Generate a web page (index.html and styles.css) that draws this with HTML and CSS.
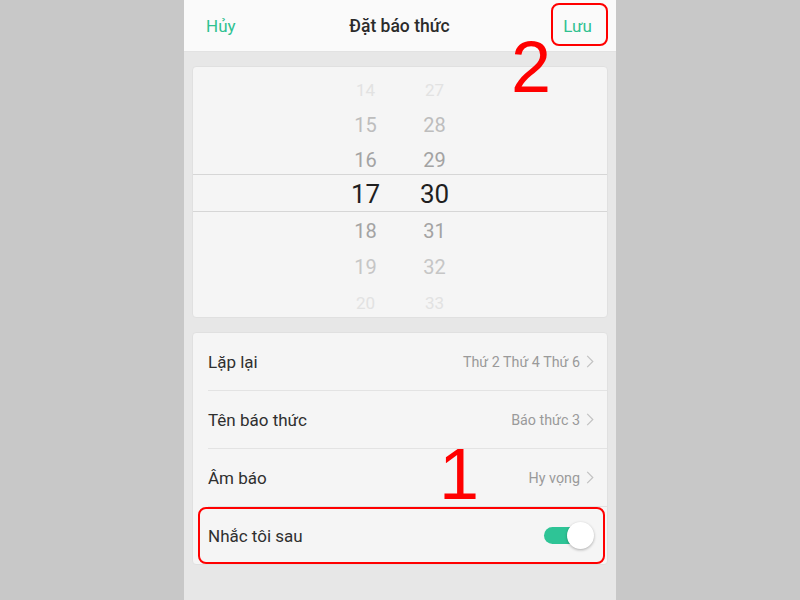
FILE: index.html
```html
<!DOCTYPE html>
<html lang="vi">
<head>
<meta charset="utf-8">
<link rel="stylesheet" href="styles.css">
</head>
<body>
<div class="page">
  <div class="phone">
    <header class="topbar">
      <span class="action">Hủy</span>
      <span class="title">Đặt báo thức</span>
      <span class="action save">Lưu</span>
    </header>

    <section class="card picker">
      <div class="wheel">
        <div class="col">
          <div class="item f3">14</div>
          <div class="item f2">15</div>
          <div class="item f1">16</div>
          <div class="item sel">17</div>
          <div class="item f1">18</div>
          <div class="item f2b">19</div>
          <div class="item f3">20</div>
        </div>
        <div class="col">
          <div class="item f3">27</div>
          <div class="item f2">28</div>
          <div class="item f1">29</div>
          <div class="item sel">30</div>
          <div class="item f1">31</div>
          <div class="item f2b">32</div>
          <div class="item f3">33</div>
        </div>
      </div>
      <div class="band"></div>
    </section>

    <section class="card list">
      <div class="row">
        <span class="label">Lặp lại</span>
        <span class="value">Thứ 2 Thứ 4 Thứ 6<svg class="chev" viewBox="0 0 8 14"><path d="M1 1l6 6-6 6" /></svg></span>
      </div>
      <div class="row">
        <span class="label">Tên báo thức</span>
        <span class="value">Báo thức 3<svg class="chev" viewBox="0 0 8 14"><path d="M1 1l6 6-6 6" /></svg></span>
      </div>
      <div class="row">
        <span class="label">Âm báo</span>
        <span class="value">Hy vọng<svg class="chev" viewBox="0 0 8 14"><path d="M1 1l6 6-6 6" /></svg></span>
      </div>
      <div class="row last">
        <span class="label">Nhắc tôi sau</span>
        <span class="toggle"><span class="knob"></span></span>
      </div>
    </section>

    <span class="mark mark-save"></span>
    <span class="num num-2">2</span>
    <span class="mark mark-row"></span>
    <span class="num num-1">1</span>
  </div>
</div>
</body>
</html>
```

FILE: styles.css
```css
* { box-sizing: border-box; }
html, body { margin: 0; padding: 0; }
body {
  background: #c8c8c8;
  font-family: Roboto, "Noto Sans", "DejaVu Sans", sans-serif;
}
.page {
  display: flex;
  justify-content: center;
  height: 600px;
  overflow: hidden;
}
.phone {
  position: relative;
  width: 432px;
  height: 600px;
  background: #e7e7e7;
}
.topbar {
  height: 52px;
  background: #fafafa;
  border-bottom: 1px solid #e2e2e2;
  display: flex;
  align-items: center;
  justify-content: space-between;
  padding: 0 24px 0 22px;
}
.action {
  color: #2fc190;
  font-size: 17px;
}
.title {
  color: #2b2b2b;
  font-size: 17.5px;
  font-weight: 500;
}
.mark {
  position: absolute;
  z-index: 5;
  border: 2px solid #ff0000;
  border-radius: 8px;
  pointer-events: none;
}
.mark-save {
  left: 367px;
  top: 3px;
  width: 57px;
  height: 43px;
}
.mark-row {
  left: 14px;
  top: 507px;
  width: 407px;
  height: 57px;
}
.num {
  position: absolute;
  z-index: 5;
  color: #ff0000;
  font-family: "Liberation Sans", Arial, sans-serif;
  font-size: 72px;
  line-height: 72px;
}
.num-2 { left: 327px; top: 31px; }
.num-1 { left: 255px; top: 438px; }

.card {
  background: #f5f5f5;
  border: 1px solid #e0e0e0;
  border-radius: 4px;
  margin: 0 8px;
}
.picker {
  position: relative;
  margin-top: 14px;
  height: 252px;
  overflow: hidden;
}
.wheel {
  display: flex;
  justify-content: center;
  padding-top: 4px;
}
.col {
  width: 69px;
  display: flex;
  flex-direction: column;
  align-items: center;
}
.item {
  height: 35px;
  line-height: 32px;
  padding-top: 3px;
  font-size: 20px;
  color: #a3a3a3;
}
.item.sel {
  height: 37px;
  line-height: 37px;
  padding-top: 0;
  font-size: 26px;
  color: #1f1f1f;
}
.item.sel ~ .item { height: 36px; line-height: 36px; padding-top: 0; }
.f2 { color: #bdbdbd; }
.f2b { color: #c6c6c6; }
.f3 { color: #e2e2e2; font-size: 17px; }
.band {
  position: absolute;
  left: 0;
  right: 0;
  top: 107px;
  height: 38px;
  border-top: 1px solid #d6d6d6;
  border-bottom: 1px solid #d6d6d6;
  pointer-events: none;
}

.list {
  margin-top: 14px;
}
.row {
  height: 58px;
  margin-left: 15px;
  padding-right: 13px;
  border-bottom: 1px solid #e3e3e3;
  display: flex;
  align-items: center;
  justify-content: space-between;
}
.row.last { border-bottom: none; height: 57px; }
.label {
  font-size: 17px;
  color: #2f2f2f;
}
.value {
  display: flex;
  align-items: center;
  font-size: 14.3px;
  color: #9a9a9a;
}
.chev {
  width: 8px;
  height: 13px;
  margin-left: 6px;
  fill: none;
  stroke: #c2c2c2;
  stroke-width: 1.3;
}
.toggle {
  position: relative;
  width: 44px;
  height: 17px;
  border-radius: 9px;
  background: #2ec496;
  margin-right: 6px;
}
.knob {
  position: absolute;
  right: -6px;
  top: -5px;
  width: 27px;
  height: 27px;
  border-radius: 50%;
  background: #ffffff;
  box-shadow: 0 1px 3px rgba(0,0,0,0.3);
}
```
